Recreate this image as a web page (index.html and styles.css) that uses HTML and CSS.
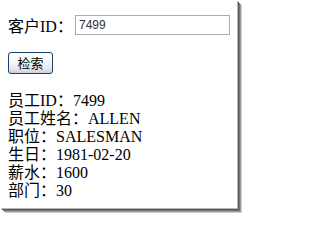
FILE: index.html
```html
<!DOCTYPE html>
<html lang="zh-CN">
<head>
<meta charset="utf-8">
<title>员工检索</title>
<link rel="stylesheet" href="styles.css">
</head>
<body>
<div class="frame">
  <div class="shot">
    <div class="search-row">
      <span class="label">客户ID：</span>
      <input class="input" type="text" value="7499">
    </div>
    <div class="btn-row">
      <button class="btn" type="button">检索</button>
    </div>
    <div class="details">
      <div>员工ID：7499</div>
      <div>员工姓名：ALLEN</div>
      <div>职位：SALESMAN</div>
      <div>生日：1981-02-20</div>
      <div>薪水：1600</div>
      <div>部门：30</div>
    </div>
  </div>
</div>
</body>
</html>
```
FILE: styles.css
```css
html, body {
  margin: 0;
  padding: 0;
  background: #fff;
}
.frame {
  width: 237px;
  height: 208px;
  padding: 0 6px 6px 0;
}
.shot {
  width: 237px;
  height: 208px;
  box-sizing: border-box;
  padding: 15px 0 0 8px;
  background: #fff;
  font-family: "Liberation Serif", "Noto Sans CJK SC", serif;
  font-size: 16px;
  color: #000;
  box-shadow: 1px 1px 0 #bbb, 2px 2px 0 #555, 3px 3px 0 #777, 4px 4px 0 #999, 5px 5px 0 #d0d0d0;
}
.search-row {
  display: flex;
  align-items: center;
  height: 20px;
}
.label {
  width: 67px;
  flex: none;
}
.input {
  width: 155px;
  height: 20px;
  box-sizing: border-box;
  margin: 0;
  border: 1px solid #a5acb2;
  padding: 0 3px;
  font-family: "Liberation Sans", sans-serif;
  font-size: 12px;
  color: #333;
  background: #fff;
  outline: none;
}
.btn-row {
  margin-top: 17px;
  height: 22px;
  display: flex;
}
.btn {
  width: 45px;
  height: 22px;
  margin: 0;
  padding: 0;
  box-sizing: border-box;
  border: 1px solid #1c3f6e;
  border-radius: 3px;
  background: linear-gradient(#ffffff 0%, #f7f7f5 45%, #e4e5ec 80%, #ccd0dc 100%);
  font-family: "Noto Sans CJK SC", sans-serif;
  font-size: 13px;
  line-height: 20px;
  color: #000;
}
.details {
  margin-top: 18px;
  line-height: 18px;
}
```
